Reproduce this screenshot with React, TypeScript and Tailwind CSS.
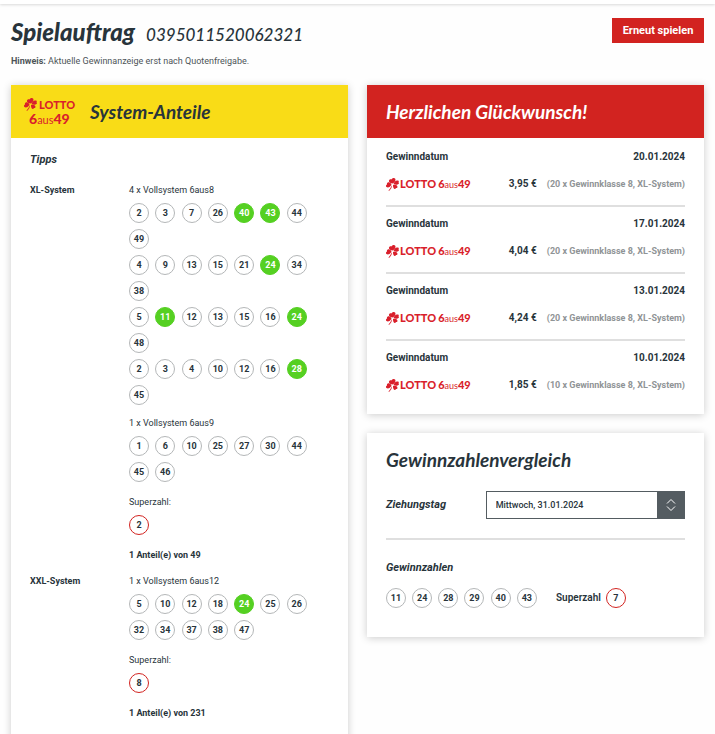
import React from "react";

type Tip = { label: string; rows: number[][] };
type System = { name: string; tips: Tip[]; superzahl: number; share: string };

const systems: System[] = [
  {
    name: "XL-System",
    tips: [
      {
        label: "4 x Vollsystem 6aus8",
        rows: [
          [2, 3, 7, 26, 40, 43, 44, 49],
          [4, 9, 13, 15, 21, 24, 34, 38],
          [5, 11, 12, 13, 15, 16, 24, 48],
          [2, 3, 4, 10, 12, 16, 28, 45],
        ],
      },
      { label: "1 x Vollsystem 6aus9", rows: [[1, 6, 10, 25, 27, 30, 44, 45, 46]] },
    ],
    superzahl: 2,
    share: "1 Anteil(e) von 49",
  },
  {
    name: "XXL-System",
    tips: [{ label: "1 x Vollsystem 6aus12", rows: [[5, 10, 12, 18, 24, 25, 26, 32, 34, 37, 38, 47]] }],
    superzahl: 8,
    share: "1 Anteil(e) von 231",
  },
];

const drawn = [11, 24, 28, 29, 40, 43];

const wins = [
  { date: "20.01.2024", amount: "3,95 €", detail: "(20 x Gewinnklasse 8, XL-System)" },
  { date: "17.01.2024", amount: "4,04 €", detail: "(20 x Gewinnklasse 8, XL-System)" },
  { date: "13.01.2024", amount: "4,24 €", detail: "(20 x Gewinnklasse 8, XL-System)" },
  { date: "10.01.2024", amount: "1,85 €", detail: "(10 x Gewinnklasse 8, XL-System)" },
];

const cardClass = "bg-white shadow-[0_1px_8px_rgba(0,0,0,0.2)]";

function Ball({ value, tone = "plain" }: { value: number; tone?: "plain" | "hit" | "super" }) {
  const tones = {
    plain: "border-[#b4b7b8] bg-white text-[#28343b]",
    hit: "border-[#55d022] bg-[#55d022] text-white",
    super: "border-[#d22320] bg-white text-[#28343b]",
  };
  return (
    <span
      className={`flex size-5 shrink-0 items-center justify-center rounded-full border text-[9px] leading-none font-bold ${tones[tone]}`}
    >
      {value}
    </span>
  );
}

function Clover({ className }: { className: string }) {
  return (
    <svg viewBox="0 0 26 26" className={className} fill="currentColor" aria-hidden="true">
      <path d="M13 11C9 11 5 9 6 5c1-3 4-3 5-2 1-3 5-4 7-2s1 7-5 10Z" />
      <path d="M11 13C9 18 4 20 1 18c-2-2-1-4 1-5-1-3 2-5 5-4 2 1 3 2 4 4Z" />
      <path d="M15 12c1-4 5-8 8-7 3 0 3 3 2 4 2 2 0 4-2 4-3 1-6 0-8-1Z" />
      <path d="M14 14c4-1 9 0 9 4 0 2-2 2-3 2-1 3-4 2-5 0-1-2-1-4-1-6Z" />
      <path d="M12 14c0 5-2 8-6 12l-1-1c3-3 5-7 7-11Z" />
    </svg>
  );
}

function LottoLine() {
  return (
    <span className="flex items-center font-['Lato','Open_Sans',sans-serif] text-[11px] leading-4 font-black text-[#d91f2b]">
      <Clover className="mr-px size-[13px]" />
      <span className="flex items-baseline">
        LOTTO
        <span className="ml-0.5">
          6<span className="text-[9px] font-normal">aus</span>49
        </span>
      </span>
    </span>
  );
}

export default function App() {
  return (
    <div className="min-h-screen bg-[#fefefe] font-['Roboto','Open_Sans',sans-serif] text-[9px] leading-4 text-[#28343b]">
      <div className="h-1 bg-white shadow-[0_1px_3px_rgba(0,0,0,0.15)]" />
      <main className="px-[11px] pt-3.5">
        <header className="flex items-start justify-between">
          <div>
            <h1 className="flex items-baseline gap-[11px] font-['Lato','Open_Sans',sans-serif] leading-7 italic">
              <span className="text-[24px] font-black">Spielauftrag</span>
              <span className="text-[17px] font-medium">0395011520062321</span>
            </h1>
            <p className="mt-1 text-[9px] text-[#4d5458]">
              <b>Hinweis:</b> Aktuelle Gewinnanzeige erst nach Quotenfreigabe.
            </p>
          </div>
          <button type="button" className="h-[25px] w-[92px] bg-[#d22320] text-[11px] font-bold text-white">
            Erneut spielen
          </button>
        </header>

        <div className="mt-4 grid grid-cols-2 items-start gap-[19px]">
          <section className={cardClass}>
            <div className="flex h-[53px] items-center bg-[#f9dc17] pl-[13px] font-['Lato','Open_Sans',sans-serif]">
              <div className="flex w-[66px] flex-col text-[#d91f2b]">
                <span className="flex items-center gap-0.5 text-[11px] leading-[14px] font-black">
                  <Clover className="size-[13px]" />
                  LOTTO
                </span>
                <span className="ml-[5px] flex items-baseline text-[14px] leading-[14px] font-black">
                  6<span className="text-[11px] leading-3 font-normal">aus</span>49
                </span>
              </div>
              <h2 className="text-[19px] font-bold italic">System-Anteile</h2>
            </div>
            <div className="px-[19px] pt-[14px] pb-10">
              <h3 className="text-[11px] font-bold italic">Tipps</h3>
              <div className="mt-[14px] flex flex-col gap-2.5">
                {systems.map((system) => (
                  <div key={system.name} className="flex">
                    <h4 className="w-[99px] shrink-0 font-bold">{system.name}</h4>
                    <div>
                      <div className="flex flex-col gap-2.5">
                        {system.tips.map((tip) => (
                          <div key={tip.label}>
                            <p>{tip.label}</p>
                            <div className="mt-[5px] flex flex-col gap-1.5">
                              {tip.rows.map((row) => (
                                <div key={row.join()} className="grid w-[184px] grid-cols-7 gap-y-1.5">
                                  {row.map((n) => (
                                    <Ball key={n} value={n} tone={drawn.includes(n) ? "hit" : "plain"} />
                                  ))}
                                </div>
                              ))}
                            </div>
                          </div>
                        ))}
                      </div>
                      <p className="mt-3 mb-[5px]">Superzahl:</p>
                      <Ball value={system.superzahl} tone="super" />
                      <p className="mt-3 font-bold">{system.share}</p>
                    </div>
                  </div>
                ))}
              </div>
            </div>
          </section>

          <div className="flex flex-col gap-[19px]">
            <section className={cardClass}>
              <div className="flex h-[53px] items-center bg-[#d22320] px-[19px] font-['Lato','Open_Sans',sans-serif] text-white">
                <h2 className="text-[19px] font-bold italic">Herzlichen Glückwunsch!</h2>
              </div>
              <ul className="px-[19px] pt-0.5 pb-2">
                {wins.map((win) => (
                  <li
                    key={win.date}
                    className="border-b-2 border-[#dfdfdf] pt-[9px] pb-[13px] text-[10px] font-bold last:border-b-0"
                  >
                    <div className="flex justify-between">
                      <span>Gewinndatum</span>
                      <span>{win.date}</span>
                    </div>
                    <div className="mt-[11px] flex h-4 items-center">
                      <LottoLine />
                      <span className="ml-auto">{win.amount}</span>
                      <span className="ml-2.5 text-[9px] text-[#8f9496]">{win.detail}</span>
                    </div>
                  </li>
                ))}
              </ul>
            </section>

            <section className={`${cardClass} px-[19px] pt-[15px] pb-[29px]`}>
              <h2 className="font-['Lato','Open_Sans',sans-serif] text-[19px] leading-6 font-bold italic">
                Gewinnzahlenvergleich
              </h2>
              <div className="mt-[19px] flex items-center justify-between border-b-2 border-[#dfdfdf] pb-[19px]">
                <label htmlFor="draw-day" className="text-[11px] font-bold italic">
                  Ziehungstag
                </label>
                <div className="relative w-2/3">
                  <select
                    id="draw-day"
                    className="h-7 w-full appearance-none border border-[#545c61] bg-white pr-8 pl-[9px] text-[9px] font-medium"
                  >
                    <option>Mittwoch, 31.01.2024</option>
                  </select>
                  <span className="pointer-events-none absolute inset-y-0 right-0 flex w-7 items-center justify-center bg-[#545c61] text-white">
                    <svg viewBox="0 0 10 14" className="h-3.5 w-2.5" fill="none" stroke="currentColor" strokeWidth="1" aria-hidden="true">
                      <path d="M1 5.5 5 1.5l4 4M1 8.5l4 4 4-4" />
                    </svg>
                  </span>
                </div>
              </div>
              <h3 className="mt-5 text-[11px] font-bold italic">Gewinnzahlen</h3>
              <div className="mt-3 flex items-center">
                <div className="grid w-[157px] grid-cols-6">
                  {drawn.map((n) => (
                    <Ball key={n} value={n} />
                  ))}
                </div>
                <span className="mr-[5px] ml-[13px] text-[10px] font-semibold">Superzahl</span>
                <Ball value={7} tone="super" />
              </div>
            </section>
          </div>
        </div>
      </main>
    </div>
  );
}
